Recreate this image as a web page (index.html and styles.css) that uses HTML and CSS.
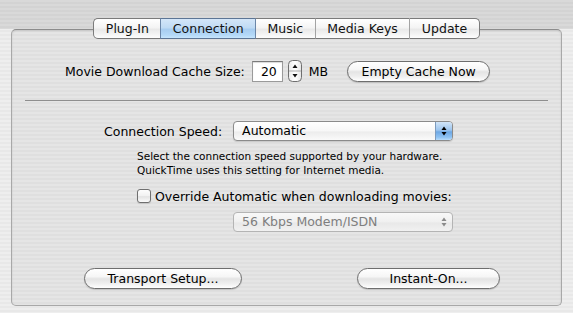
FILE: index.html
```html
<!DOCTYPE html>
<html>
<head>
<meta charset="utf-8">
<link rel="stylesheet" href="styles.css">
</head>
<body>
<div class="window">
  <div class="tabs">
    <div class="tab first">Plug-In</div>
    <div class="tab selected">Connection</div>
    <div class="tab">Music</div>
    <div class="tab">Media Keys</div>
    <div class="tab last">Update</div>
  </div>
  <div class="box">
    <div class="row cache-row">
      <span class="label">Movie Download Cache Size:</span>
      <span class="field">20</span>
      <svg class="stepper" width="14" height="22" viewBox="0 0 14 22">
        <defs>
          <linearGradient id="stg" x1="0" y1="0" x2="1" y2="0">
            <stop offset="0" stop-color="#e9e9e9"/>
            <stop offset="0.5" stop-color="#ffffff"/>
            <stop offset="1" stop-color="#e4e4e4"/>
          </linearGradient>
        </defs>
        <rect x="0.5" y="0.5" width="13" height="21" rx="4" fill="url(#stg)" stroke="#6f6f6f"/>
        <line x1="1" y1="11" x2="13" y2="11" stroke="#a9a9a9"/>
        <path d="M7 4.5 L9.5 8 L4.5 8 Z" fill="#111"/>
        <path d="M7 17.5 L9.5 14 L4.5 14 Z" fill="#111"/>
      </svg>
      <span class="unit">MB</span>
      <button class="btn empty-btn">Empty Cache Now</button>
    </div>
    <div class="sep"></div>
    <div class="row speed-row">
      <span class="label">Connection Speed:</span>
      <div class="popup">
        <span class="popup-text">Automatic</span>
        <span class="popup-arrows">
          <svg width="16" height="18" viewBox="0 0 16 18">
            <path d="M8 4.5 L10.5 8 L5.5 8 Z" fill="#000"/>
            <path d="M8 13.5 L10.5 10 L5.5 10 Z" fill="#000"/>
          </svg>
        </span>
      </div>
    </div>
    <p class="desc">Select the connection speed supported by your hardware.<br>QuickTime uses this setting for Internet media.</p>
    <div class="check-row">
      <span class="checkbox"></span>
      <span class="check-label">Override Automatic when downloading movies:</span>
    </div>
    <div class="popup disabled">
      <span class="popup-text">56 Kbps Modem/ISDN</span>
      <span class="popup-arrows">
        <svg width="16" height="18" viewBox="0 0 16 18">
          <path d="M8 4.5 L10.5 8 L5.5 8 Z" fill="#8a8a8a"/>
          <path d="M8 13.5 L10.5 10 L5.5 10 Z" fill="#8a8a8a"/>
        </svg>
      </span>
    </div>
    <div class="row buttons-row">
      <button class="btn transport-btn">Transport Setup...</button>
      <button class="btn instant-btn">Instant-On...</button>
    </div>
  </div>
</div>
</body>
</html>
```
FILE: styles.css
```css
html, body {
  margin: 0;
  padding: 0;
}

body {
  font-family: "DejaVu Sans", "Liberation Sans", sans-serif;
  font-size: 12.5px;
  color: #000;
}

.window {
  width: 573px;
  height: 313px;
  box-sizing: border-box;
  padding-top: 18px;
  overflow: hidden;
  background:
    linear-gradient(rgba(0, 0, 0, 0.09), rgba(0, 0, 0, 0.09)) top / 100% 29px no-repeat,
    repeating-linear-gradient(#eeeeee 0 2px, #e8e8e8 2px 4px);
}

/* Tabs */
.tabs {
  display: flex;
  justify-content: center;
  position: relative;
  z-index: 1;
  height: 21px;
}

.tab {
  height: 21px;
  box-sizing: border-box;
  padding: 0 11.5px;
  line-height: 19px;
  border-top: 1px solid #7b7b7b;
  border-bottom: 1px solid #777;
  border-left: 1px solid #a3a3a3;
  background: linear-gradient(#ffffff, #f4f4f4 45%, #e9e9e9 55%, #f6f6f6 85%, #fdfdfd);
  color: #111;
}

.tab.first {
  border-left: 1px solid #7b7b7b;
  border-radius: 5px 0 0 5px;
}

.tab.last {
  border-right: 1px solid #7b7b7b;
  border-radius: 0 5px 5px 0;
}

.tab.selected {
  background: linear-gradient(#d4e6f8, #c0dbf4 45%, #a8cdf0 55%, #b4d9f8 85%, #c8e6fd);
  border-top-color: #5c7595;
  border-bottom-color: #5c7595;
  border-left-color: #6b86a8;
}

.tab.selected + .tab {
  border-left-color: #6b86a8;
}

/* Group box */
.box {
  margin: -10px 11px 0;
  height: 277px;
  box-sizing: border-box;
  border: 1px solid #a8a8a8;
  border-top-color: #8c8c8c;
  border-radius: 5px;
  background: rgba(0, 0, 0, 0.035);
  box-shadow: inset 0 1px 2px rgba(0, 0, 0, 0.12);
  padding-top: 30px;
}

.row {
  display: flex;
  align-items: center;
}

.cache-row {
  height: 22px;
  margin-left: 53px;
}

.field {
  width: 31px;
  height: 21px;
  box-sizing: border-box;
  margin-left: 7px;
  background: #fff;
  border: 1px solid #9a9a9a;
  border-top-color: #7a7a7a;
  text-align: right;
  padding-right: 5px;
  line-height: 19px;
  box-shadow: inset 0 1px 1px rgba(0, 0, 0, 0.15);
}

.stepper {
  margin-left: 5px;
  display: block;
}

.unit {
  margin-left: 7px;
}

.btn {
  font-family: inherit;
  font-size: 12.5px;
  color: #000;
  height: 21px;
  padding: 0;
  border: 1px solid #6e6e6e;
  border-radius: 11px;
  background: linear-gradient(#ffffff, #f6f6f6 40%, #e4e4e4 52%, #eeeeee 75%, #ffffff);
  box-shadow: 0 1px 1px rgba(0, 0, 0, 0.15);
  line-height: 19px;
}

.empty-btn {
  width: 143px;
  margin-left: 19px;
}

.sep {
  height: 1px;
  background: #8e8e8e;
  margin: 18px 13px 0;
}

.speed-row {
  margin-top: 20px;
  margin-left: 92px;
}

.popup {
  display: flex;
  align-items: center;
  width: 220px;
  height: 20px;
  box-sizing: border-box;
  margin-left: 11px;
  border: 1px solid #8b8b8b;
  border-radius: 4px;
  background: linear-gradient(#ffffff, #f7f7f7 50%, #ececec 55%, #fafafa);
  box-shadow: 0 1px 1px rgba(0, 0, 0, 0.12);
  overflow: hidden;
}

.popup-text {
  flex: 1;
  padding-left: 8px;
  line-height: 18px;
}

.popup-arrows {
  width: 16px;
  height: 18px;
  display: flex;
  border-left: 1px solid #7d9bbd;
  background: linear-gradient(#d2e5f8, #9dc5ee 45%, #6da7e4 55%, #8fc3f3 85%, #b9dcfb);
}

.popup-arrows svg {
  display: block;
}

.popup.disabled {
  margin-left: 221px;
  margin-top: 8px;
  border-color: #b4b4b4;
  background: linear-gradient(#f8f8f8, #f0f0f0 50%, #e8e8e8 55%, #f1f1f1);
  box-shadow: none;
}

.popup.disabled .popup-text {
  color: #7e7e7e;
}

.popup.disabled .popup-arrows {
  background: none;
  border-left: none;
}

.desc {
  margin: 8px 0 0 125px;
  font-size: 10.5px;
  line-height: 14px;
}

.check-row {
  display: flex;
  align-items: center;
  height: 16px;
  margin: 11px 0 0 125px;
}

.checkbox {
  width: 14px;
  height: 14px;
  box-sizing: border-box;
  border: 1px solid #6f6f6f;
  border-radius: 3px;
  background: linear-gradient(#fdfdfd, #f1f1f1 50%, #e3e3e3 55%, #fbfbfb);
  box-shadow: 0 1px 1px rgba(0, 0, 0, 0.12);
}

.check-label {
  margin-left: 4px;
}

.buttons-row {
  margin-top: 36px;
  margin-left: 72px;
}

.transport-btn {
  width: 158px;
}

.instant-btn {
  width: 143px;
  margin-left: 115px;
}
```
